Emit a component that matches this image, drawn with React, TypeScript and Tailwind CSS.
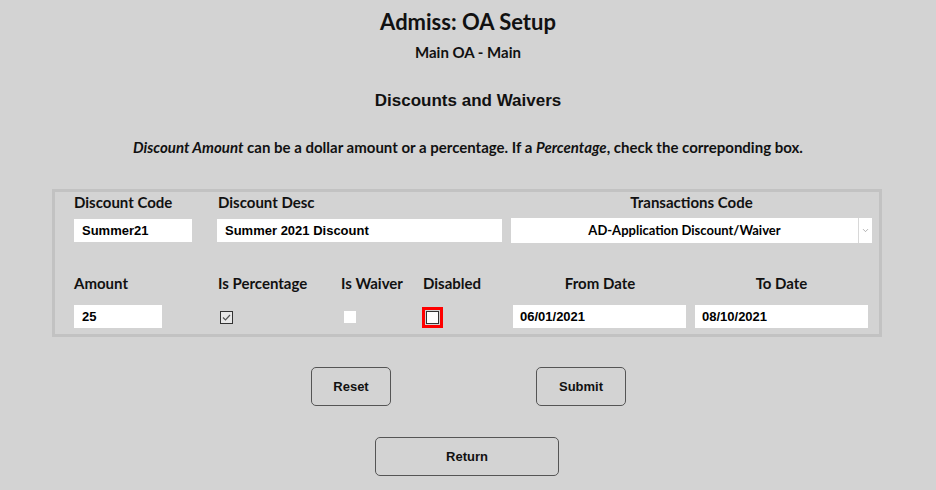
import { ChevronDown } from 'lucide-react';

const geo = "font-['Lato','Noto_Sans',sans-serif]";
const arial = "font-['Liberation_Sans',Arial,sans-serif]";

function Label({ children, className = '' }: { children: React.ReactNode; className?: string }) {
  return <div className={`${geo} text-[15px] font-bold text-[#111] leading-[18px] ${className}`}>{children}</div>;
}

function TextBox({ value, className = '' }: { value: string; className?: string }) {
  return (
    <div className={`h-[23px] bg-white ${arial} text-[13px] font-bold text-black leading-[23px] pl-2 ${className}`}>
      {value}
    </div>
  );
}

export default function App() {
  return (
    <div className="w-[936px] h-[490px] bg-[#d3d3d3] overflow-hidden">
      {/* Header */}
      <div className="flex flex-col items-center">
        <h1 className={`${geo} mt-[8px] text-[22px] font-bold text-[#111] leading-[28px]`}>Admiss: OA Setup</h1>
        <div className={`${geo} mt-[7px] text-[15px] font-bold text-[#111] leading-[18px]`}>Main OA - Main</div>
        <h2 className={`${arial} mt-[30px] text-[17px] font-bold text-[#111] leading-[20px]`}>Discounts and Waivers</h2>
        <p className={`${geo} mt-[27px] text-[15px] font-bold text-[#111] leading-[18px]`}>
          <i>Discount Amount</i> can be a dollar amount or a percentage. If a <i>Percentage</i>, check the correponding box.
        </p>
      </div>

      {/* Form box */}
      <div className="mt-[33px] ml-[52px] w-[830px] h-[148px] border-[3px] border-[#c2c2c2]">
        {/* Row 1 */}
        <div className="flex mt-px pl-[19px]">
          <div className="w-[143px]">
            <Label>Discount Code</Label>
            <TextBox value="Summer21" className="mt-[8px] w-[118px]" />
          </div>
          <div className="w-[294px]">
            <Label className="pl-px">Discount Desc</Label>
            <TextBox value="Summer 2021 Discount" className="mt-[8px] w-[285px]" />
          </div>
          <div className="w-[361px]">
            <Label className="text-center">Transactions Code</Label>
            <div className="mt-[7px] h-[25px] bg-white flex">
              <div className={`flex-1 ${geo} text-[13px] font-bold text-black leading-[25px] text-center`}>
                AD-Application Discount/Waiver
              </div>
              <div className="w-[14px] border-l border-[#d8d8d8] flex items-center justify-center">
                <ChevronDown className="w-[9px] h-[9px] text-[#999]" strokeWidth={2} />
              </div>
            </div>
          </div>
        </div>

        {/* Row 2 */}
        <div className="flex mt-[31px] pl-[19px]">
          <div className="w-[144px]">
            <Label>Amount</Label>
            <TextBox value="25" className="mt-[13px] w-[88px]" />
          </div>
          <div className="w-[123px]">
            <Label>Is Percentage</Label>
            <div className="mt-[19px] ml-[2px] w-[13px] h-[13px] bg-[#e8e8e8] border border-[#333] flex items-center justify-center">
              <svg viewBox="0 0 11 11" className="w-[11px] h-[11px]">
                <path d="M2 5.5 L4.5 8 L9 3" fill="none" stroke="#555" strokeWidth="1.2" />
              </svg>
            </div>
          </div>
          <div className="w-[82px]">
            <Label>Is Waiver</Label>
            <div className="mt-[19px] ml-[3px] w-[12px] h-[12px] bg-white" />
          </div>
          <div className="w-[90px]">
            <Label>Disabled</Label>
            <div className="mt-[15px] -ml-px w-[21px] h-[21px] border-[3px] border-[#ff0000] p-px">
              <div className="w-full h-full bg-white border border-[#333]" />
            </div>
          </div>
          <div className="w-[182px]">
            <Label className="text-center pr-[8px]">From Date</Label>
            <TextBox value="06/01/2021" className="mt-[13px] w-[173px] pl-[7px]" />
          </div>
          <div className="w-[173px]">
            <Label className="text-center">To Date</Label>
            <TextBox value="08/10/2021" className="mt-[13px] w-[173px] pl-[7px]" />
          </div>
        </div>
      </div>

      {/* Buttons */}
      <div className="flex mt-[30px]">
        <button className={`ml-[311px] w-[80px] h-[39px] rounded-[5px] border border-[#555] ${arial} text-[13px] font-bold text-[#111]`}>
          Reset
        </button>
        <button className={`ml-[145px] w-[90px] h-[39px] rounded-[5px] border border-[#555] ${arial} text-[13px] font-bold text-[#111]`}>
          Submit
        </button>
      </div>
      <div className="flex mt-[31px]">
        <button className={`ml-[375px] w-[184px] h-[39px] rounded-[5px] border border-[#555] ${arial} text-[13px] font-bold text-[#111]`}>
          Return
        </button>
      </div>
    </div>
  );
}
